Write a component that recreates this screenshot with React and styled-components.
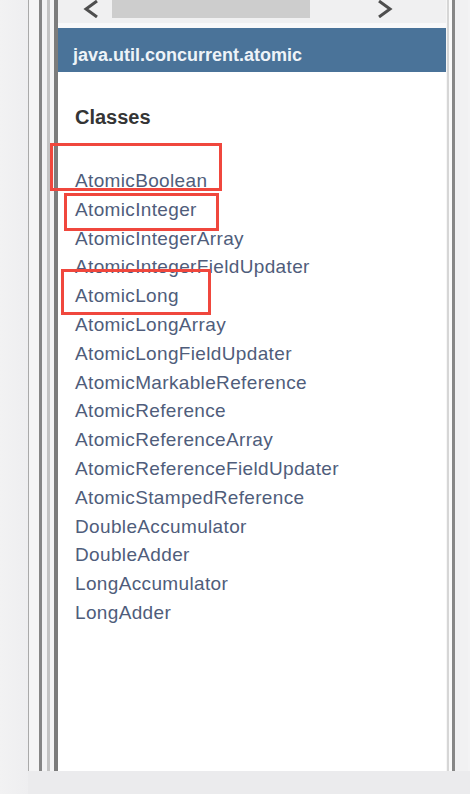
import React from "react";
import styled, { createGlobalStyle } from "styled-components";

const GlobalStyle = createGlobalStyle`
  html, body {
    margin: 0;
    padding: 0;
    background: #efeff1;
    font-family: "Liberation Sans", Arial, sans-serif;
  }
`;

const classes = [
  "AtomicBoolean",
  "AtomicInteger",
  "AtomicIntegerArray",
  "AtomicIntegerFieldUpdater",
  "AtomicLong",
  "AtomicLongArray",
  "AtomicLongFieldUpdater",
  "AtomicMarkableReference",
  "AtomicReference",
  "AtomicReferenceArray",
  "AtomicReferenceFieldUpdater",
  "AtomicStampedReference",
  "DoubleAccumulator",
  "DoubleAdder",
  "LongAccumulator",
  "LongAdder",
];

// red highlight boxes drawn over the list (annotations in the screenshot)
const marks = [
  { left: -8, top: 71, width: 172, height: 48 },
  { left: 6, top: 121, width: 155, height: 38 },
  { left: 3, top: 197, width: 150, height: 46 },
];

const Page = styled.div`
  height: 794px;
  width: 470px;
  display: flex;
  overflow: hidden;
`;

const Gutter = styled.div`
  width: 28px;
  flex-shrink: 0;
  background: linear-gradient(90deg, #f2f2f3 0%, #eeeef0 100%);
`;

const Column = styled.div`
  flex: 1;
  display: flex;
  flex-direction: column;
`;

const Frame = styled.div`
  flex: 1;
  display: flex;
  background: #f3f3f4;
`;

const Rail = styled.div`
  width: ${(p) => p.$w}px;
  flex-shrink: 0;
  background: ${(p) => p.$c};
`;

const Panel = styled.div`
  width: 388px;
  flex-shrink: 0;
  display: flex;
  flex-direction: column;
  background: #fff;
`;

const ScrollBar = styled.div`
  height: 23px;
  display: grid;
  grid-template-columns: 54px 198px 1fr;
  align-items: start;
  background: #f0f0f1;
  border-bottom: 5px solid #f9f9fa;
`;

const Arrow = styled.div`
  height: 18px;
  display: flex;
  align-items: center;
  padding-left: ${(p) => p.$pad}px;
`;

const Thumb = styled.div`
  height: 18px;
  background: #cdcdcd;
`;

const Header = styled.div`
  height: 44px;
  display: flex;
  align-items: center;
  padding: 11px 0 0 15px;
  box-sizing: border-box;
  background: #4a7399;
  color: #eef3f8;
  font-size: 18px;
  font-weight: bold;
`;

const Body = styled.div`
  position: relative;
  flex: 1;
  padding: 33px 0 0 17px;
`;

const Title = styled.h2`
  margin: 0 0 38px;
  font-size: 20px;
  line-height: 24px;
  font-weight: bold;
  color: #353535;
`;

const List = styled.ul`
  margin: 0;
  padding: 0;
  list-style: none;
`;

const Item = styled.li`
  font-size: 19px;
  line-height: 28.8px;
  color: #4f5d7b;
  letter-spacing: 0.35px;
`;

const Mark = styled.div`
  position: absolute;
  border: 3px solid #f0473d;
  box-sizing: border-box;
`;

const BottomBar = styled.div`
  height: 23px;
  background: #ebebed;
`;

function Chevron({ dir }) {
  const d = dir === "left" ? "M14 1 L3 9 L14 17" : "M2 1 L13 9 L2 17";
  return (
    <svg width="16" height="18" viewBox="0 0 16 18">
      <path d={d} fill="none" stroke="#4e4e4e" strokeWidth="3" />
    </svg>
  );
}

export default function App() {
  return (
    <>
      <GlobalStyle />
      <Page>
        <Gutter />
        <Column>
          <Frame>
            <Rail $w={1} $c="#a9a9a9" />
            <Rail $w={10} $c="#f4f4f5" />
            <Rail $w={3} $c="#858585" />
            <Rail $w={5} $c="#f2f2f3" />
            <Rail $w={3} $c="#c3c3c3" />
            <Rail $w={4} $c="#f4f4f5" />
            <Rail $w={4} $c="#7c7c7c" />
            <Panel>
              <ScrollBar>
                <Arrow $pad={25}>
                  <Chevron dir="left" />
                </Arrow>
                <Thumb />
                <Arrow $pad={67}>
                  <Chevron dir="right" />
                </Arrow>
              </ScrollBar>
              <Header>java.util.concurrent.atomic</Header>
              <Body>
                <Title>Classes</Title>
                <List>
                  {classes.map((c) => (
                    <Item key={c}>{c}</Item>
                  ))}
                </List>
                {marks.map((m, i) => (
                  <Mark key={i} style={m} />
                ))}
              </Body>
            </Panel>
            <Rail $w={1} $c="#f6f6f6" />
            <Rail $w={2} $c="#d6d6d6" />
            <Rail $w={3} $c="#fafafa" />
            <Rail $w={3} $c="#878787" />
            <Rail $w={13} $c="#f1f1f2" />
          </Frame>
          <BottomBar />
        </Column>
      </Page>
    </>
  );
}
